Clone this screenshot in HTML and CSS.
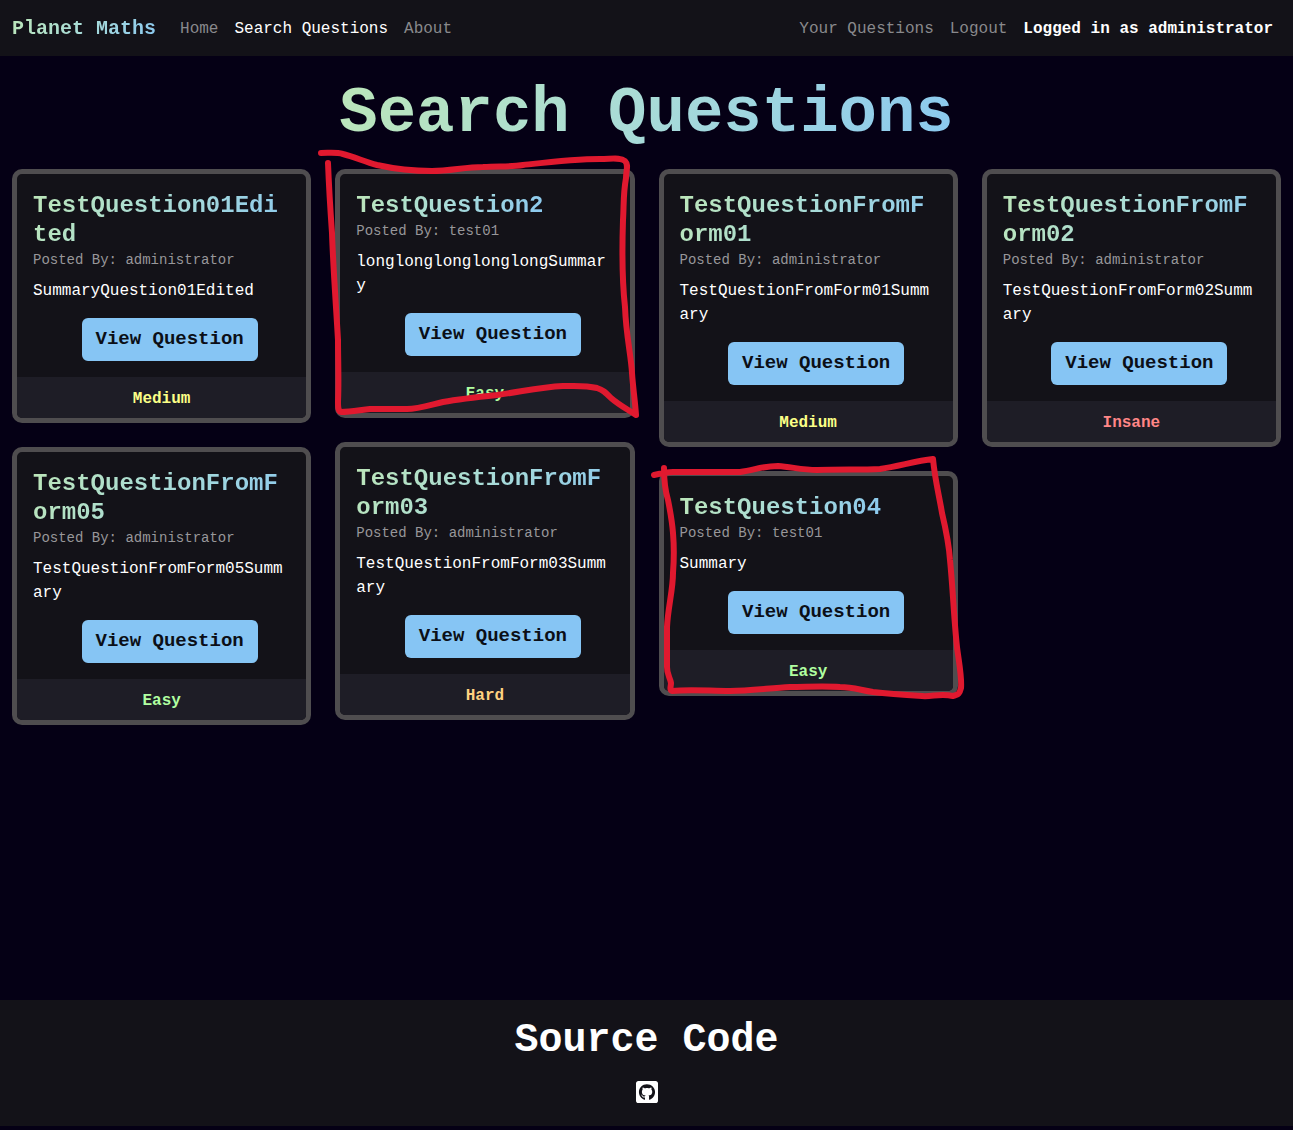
FILE: index.html
```html
<!DOCTYPE html>
<html lang="en">
<head>
  <meta charset="utf-8">
  <meta name="viewport" content="width=device-width, initial-scale=1">
  <title>Planet Maths - Search Questions</title>
  <link rel="stylesheet" href="styles.css">
</head>
<body>
  <nav class="navbar">
    <a class="brand gradient" href="#">Planet Maths</a>
    <div class="nav-group">
      <a class="nav-link" href="#">Home</a>
      <a class="nav-link active" href="#">Search Questions</a>
      <a class="nav-link" href="#">About</a>
    </div>
    <div class="nav-group nav-end">
      <a class="nav-link" href="#">Your Questions</a>
      <a class="nav-link" href="#">Logout</a>
      <span class="nav-link user">Logged in as administrator</span>
    </div>
  </nav>

  <main class="content">
    <h1 class="page-title gradient">Search Questions</h1>
    <div class="board">
      <div class="column">
        <article class="card">
          <div class="card-body">
            <h2 class="card-title gradient">TestQuestion01Edited</h2>
            <p class="posted">Posted By: administrator</p>
            <p class="summary">SummaryQuestion01Edited</p>
            <div class="action"><a class="btn" href="#">View Question</a></div>
          </div>
          <div class="card-footer medium">Medium</div>
        </article>
        <article class="card">
          <div class="card-body">
            <h2 class="card-title gradient">TestQuestionFromForm05</h2>
            <p class="posted">Posted By: administrator</p>
            <p class="summary">TestQuestionFromForm05Summary</p>
            <div class="action"><a class="btn" href="#">View Question</a></div>
          </div>
          <div class="card-footer easy">Easy</div>
        </article>
      </div>
      <div class="column">
        <article class="card">
          <div class="card-body">
            <h2 class="card-title gradient">TestQuestion2</h2>
            <p class="posted">Posted By: test01</p>
            <p class="summary">longlonglonglonglongSummary</p>
            <div class="action"><a class="btn" href="#">View Question</a></div>
          </div>
          <div class="card-footer easy">Easy</div>
        </article>
        <article class="card">
          <div class="card-body">
            <h2 class="card-title gradient">TestQuestionFromForm03</h2>
            <p class="posted">Posted By: administrator</p>
            <p class="summary">TestQuestionFromForm03Summary</p>
            <div class="action"><a class="btn" href="#">View Question</a></div>
          </div>
          <div class="card-footer hard">Hard</div>
        </article>
      </div>
      <div class="column">
        <article class="card">
          <div class="card-body">
            <h2 class="card-title gradient">TestQuestionFromForm01</h2>
            <p class="posted">Posted By: administrator</p>
            <p class="summary">TestQuestionFromForm01Summary</p>
            <div class="action"><a class="btn" href="#">View Question</a></div>
          </div>
          <div class="card-footer medium">Medium</div>
        </article>
        <article class="card">
          <div class="card-body">
            <h2 class="card-title gradient">TestQuestion04</h2>
            <p class="posted">Posted By: test01</p>
            <p class="summary">Summary</p>
            <div class="action"><a class="btn" href="#">View Question</a></div>
          </div>
          <div class="card-footer easy">Easy</div>
        </article>
      </div>
      <div class="column">
        <article class="card">
          <div class="card-body">
            <h2 class="card-title gradient">TestQuestionFromForm02</h2>
            <p class="posted">Posted By: administrator</p>
            <p class="summary">TestQuestionFromForm02Summary</p>
            <div class="action"><a class="btn" href="#">View Question</a></div>
          </div>
          <div class="card-footer insane">Insane</div>
        </article>
      </div>
    </div>
  </main>

  <footer class="footer">
    <h2 class="footer-title">Source Code</h2>
    <a class="repo" href="#" aria-label="GitHub">
      <svg class="repo-icon" viewBox="0 32 448 448" aria-hidden="true"><path d="M400 32H48C21.500 32 0 53.500 0 80v352c0 26.500 21.500 48 48 48h352c26.500 0 48-21.500 48-48V80c0-26.500-21.500-48-48-48zM277.300 415.700c-8.400 1.500-11.500-3.700-11.500-8 0-5.400.2-33 .2-55.300 0-15.600-5.200-25.500-11.300-30.700 37-4.100 76-9.200 76-73.100 0-18.200-6.500-27.300-17.100-39 1.700-4.300 7.400-22-1.700-45-13.900-4.300-45.700 17.900-45.700 17.900-13.200-3.700-27.500-5.600-41.600-5.600-14.100 0-28.400 1.900-41.600 5.600 0 0-31.800-22.200-45.700-17.900-9.100 22.900-3.500 40.600-1.700 45-10.600 11.700-15.600 20.800-15.600 39 0 63.600 37.300 69 74.300 73.100-4.800 4.300-9.100 11.700-10.600 22.300-9.500 4.300-33.800 11.700-48.300-13.900-9.100-15.800-25.500-17.100-25.500-17.100-16.200-.2-1.100 10.200-1.100 10.200 10.800 5 18.400 24.200 18.400 24.200 9.700 29.700 56.100 19.700 56.100 19.700 0 13.900.2 36.500.2 40.600 0 4.300-3 9.500-11.500 8-66-22.100-112.200-84.900-112.200-158.300 0-91.800 70.200-161.500 162-161.500S388 165.600 388 257.400c.1 73.400-44.700 136.300-110.700 158.300z"/></svg>
    </a>
  </footer>

  <!-- Hand-drawn marks around the two cards posted by test01 -->
  <svg class="marks" width="980" height="710" viewBox="0 0 980 710" aria-hidden="true">
    <path d="M321 153C330 153 336 152 343 154C355 157 365 162 377 165C395 169 412 171 432 171C450 171 465 167 483 167C500 166 510 167 523 165C550 162 575 159 600 159C612 159 620 157 625 161C629 165 626 170 626 178C623 195 624 205 623 220C622 250 622 280 625 307C626 335 631 355 632 373C633 388 635 400 636 415C627 409 619 405 611 398C605 392 603 390 597 388C585 385 574 386 563 386C540 387 520 392 497 395C478 397 460 399 443 402C430 405 418 409 407 409L370 409C360 410 351 412 341 412C338 411 338 407 338 402C339 380 338 360 338 340C336 305 333 265 332 233C330 205 329 188 328 163"/>
    <path d="M654 475C662 473 667 472 673 472L740 472C755 470 762 466 778 466C792 467 802 470 817 470C840 469 860 470 880 469C900 466 915 461 933 459C935 480 939 495 942 513C946 530 949 545 950 560C953 590 954 620 957 647C959 663 962 677 961 688C959 696 957 694 953 696C940 693 932 697 922 696C905 695 889 694 873 692C860 690 853 687 840 687C822 686 806 687 790 687C770 688 750 691 730 691C710 691 690 689 672 691C669 690 671 687 671 683C670 677 667 675 667 667L667 627C668 607 673 590 673 573C674 560 674 545 673 533C672 520 670 510 668 500C665 490 664 480 664 468"/>
  </svg>
</body>
</html>
```
FILE: styles.css
```css
* {
  box-sizing: border-box;
}

body {
  position: relative;
  display: flex;
  flex-direction: column;
  min-height: 100vh;
  margin: 0;
  padding-bottom: 4px;
  background: #050015;
  color: #fff;
  font-family: "Liberation Mono", monospace;
  font-size: 16px;
  line-height: 24px;
}

h1,
h2,
p {
  margin: 0;
}

a {
  color: inherit;
  text-decoration: none;
}

.gradient {
  background: linear-gradient(120deg, #bce6b9, #a8dbd8 50%, #8ac8f0);
  -webkit-background-clip: text;
  background-clip: text;
  color: transparent;
}

.navbar {
  display: flex;
  align-items: center;
  min-height: 56px;
  padding: 9px 12px 7px;
  background: #131218;
}

.brand {
  margin-right: 16px;
  font-size: 20px;
  font-weight: 600;
}

.nav-group {
  display: flex;
}

.nav-end {
  margin-left: auto;
}

.nav-link {
  padding: 8px;
  color: #89898c;
}

.nav-link.active,
.nav-link.user {
  color: #fff;
}

.nav-link.user {
  font-weight: 600;
}

.content {
  display: flex;
  flex-direction: column;
  padding: 20px 12px 24px;
}

.page-title {
  align-self: center;
  margin-bottom: 16px;
  font-size: 64px;
  font-weight: 600;
  line-height: 77px;
}

.board {
  display: grid;
  grid-template-columns: repeat(4, minmax(0, 1fr));
  align-items: start;
  gap: 24px;
}

.column {
  display: grid;
  gap: 24px;
}

.card {
  overflow: hidden;
  border: 5px solid #4f4d4f;
  border-radius: 10px;
  background: #131218;
  overflow-wrap: anywhere;
}

.card-body {
  padding: 17px 16px 16px;
}

.card-title {
  width: fit-content;
  font-size: 24px;
  font-weight: 600;
  line-height: 29px;
}

.posted {
  margin-bottom: 8px;
  color: #98979a;
  font-size: 14px;
  line-height: 22px;
}

.summary {
  margin-bottom: 15px;
}

.action {
  display: flex;
  justify-content: center;
  padding-left: 16px;
}

.btn {
  padding: 7px 14px;
  border-radius: 6px;
  background: #86c5f4;
  color: #0b0f17;
  font-size: 19px;
  font-weight: 600;
  line-height: 29px;
}

.card-footer {
  padding: 10px 16px 7px;
  background: #1e1d26;
  font-weight: 700;
  text-align: center;
}

.easy {
  color: #b0ffa0;
}

.medium {
  color: #fbff86;
}

.hard {
  color: #ffd280;
}

.insane {
  color: #ff8686;
}

.footer {
  display: flex;
  flex-direction: column;
  align-items: center;
  gap: 16px;
  margin-top: auto;
  padding: 17px 12px 23px;
  background: #131218;
}

.footer-title {
  font-size: 40px;
  font-weight: 700;
  line-height: 48px;
}

.repo {
  display: flex;
}

.repo-icon {
  width: 22px;
  height: 22px;
  fill: #fff;
}

.marks {
  position: absolute;
  top: 0;
  left: 0;
  fill: none;
  stroke: #e0192f;
  stroke-width: 6px;
  stroke-linecap: round;
  stroke-linejoin: round;
  pointer-events: none;
}
```
